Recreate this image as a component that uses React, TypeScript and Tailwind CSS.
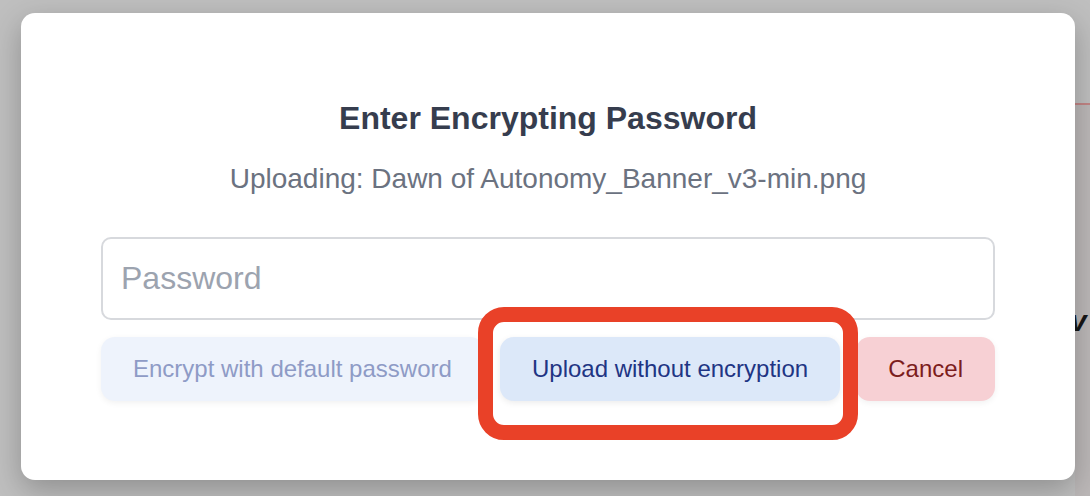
export default function App() {
  return (
    <div
      className="relative w-[1090px] h-[496px] overflow-hidden bg-[#bfbfbf] pt-[13px] pl-[21px]"
      style={{ fontFamily: '"Liberation Sans", Arial, Helvetica, sans-serif' }}
    >
      {/* page behind the overlay */}
      <div className="absolute left-[1075px] top-[103px] right-0 bottom-0 bg-[#bcb8b8] border-t-2 border-[#c28585]">
        <span className="absolute left-[-5px] top-[201px] text-[30px] italic font-bold text-[#161616] leading-none">
          v
        </span>
      </div>

      {/* dialog */}
      <div className="relative w-[1054px] h-[467px] rounded-[14px] bg-white px-20 pt-[85px] shadow-[0_10px_30px_rgba(0,0,0,0.25)] flex flex-col items-center">
        <h2 className="text-[32px] leading-[40px] font-bold text-[#363d4e]">
          Enter Encrypting Password
        </h2>
        <p className="mt-[23px] text-[28px] leading-[36px] text-[#6b7280]">
          Uploading: Dawn of Autonomy_Banner_v3-min.png
        </p>

        <input
          type="password"
          placeholder="Password"
          className="mt-[40px] w-full h-[83px] rounded-[10px] border-2 border-[#d7d9dd] px-[18px] text-[32px] text-[#374151] placeholder:text-[#9ca3af] outline-none"
        />

        <div className="mt-[17px] w-full flex justify-between">
          <button className="h-16 px-8 rounded-[14px] bg-[#eef3fc] text-[24px] text-[#8e9bc6] shadow-[0_2px_6px_rgba(0,0,0,0.06)]">
            Encrypt with default password
          </button>
          <button className="h-16 px-8 rounded-[14px] bg-[#dce8f9] text-[24px] text-[#1f3584] shadow-[0_2px_6px_rgba(0,0,0,0.08)]">
            Upload without encryption
          </button>
          <button className="h-16 px-8 rounded-[14px] bg-[#f7d0d4] text-[24px] text-[#7c1d1d] shadow-[0_2px_6px_rgba(0,0,0,0.06)]">
            Cancel
          </button>
        </div>

        {/* annotation around the middle button */}
        <div className="absolute left-[457px] top-[294px] w-[380px] h-[133px] rounded-[26px] border-[15px] border-[#e94128] pointer-events-none" />
      </div>
    </div>
  );
}
